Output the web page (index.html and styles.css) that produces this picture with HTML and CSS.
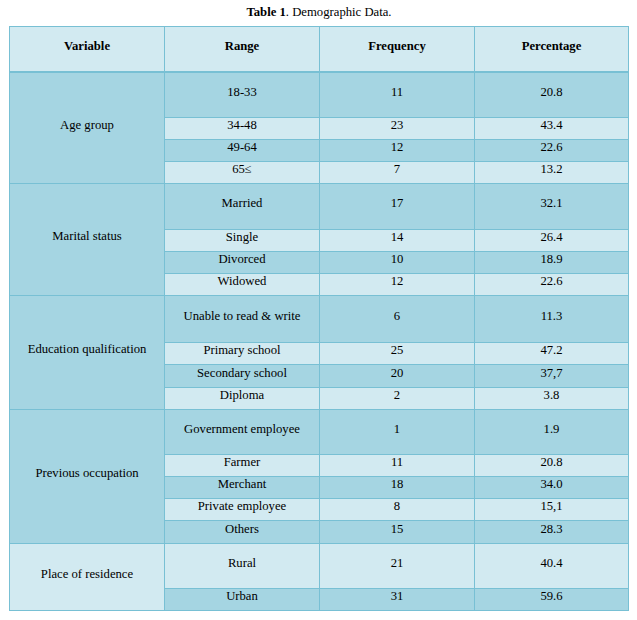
FILE: index.html
```html
<!DOCTYPE html>
<html>
<head>
<meta charset="utf-8">
<title>Table 1. Demographic Data.</title>
<link rel="stylesheet" href="styles.css">
</head>
<body>
<div class="page">
  <div class="caption"><b>Table 1</b>. Demographic Data.</div>
  <div class="table">
    <div class="cell head">Variable</div>
    <div class="cell head">Range</div>
    <div class="cell head">Frequency</div>
    <div class="cell head">Percentage</div>

    <div class="cell var dark span4">Age group</div>
    <div class="cell dark">18-33</div><div class="cell dark">11</div><div class="cell dark">20.8</div>
    <div class="cell light">34-48</div><div class="cell light">23</div><div class="cell light">43.4</div>
    <div class="cell dark">49-64</div><div class="cell dark">12</div><div class="cell dark">22.6</div>
    <div class="cell light">65≤</div><div class="cell light">7</div><div class="cell light">13.2</div>

    <div class="cell var dark span4">Marital status</div>
    <div class="cell dark">Married</div><div class="cell dark">17</div><div class="cell dark">32.1</div>
    <div class="cell light">Single</div><div class="cell light">14</div><div class="cell light">26.4</div>
    <div class="cell dark">Divorced</div><div class="cell dark">10</div><div class="cell dark">18.9</div>
    <div class="cell light">Widowed</div><div class="cell light">12</div><div class="cell light">22.6</div>

    <div class="cell var dark span4">Education qualification</div>
    <div class="cell dark">Unable to read &amp; write</div><div class="cell dark">6</div><div class="cell dark">11.3</div>
    <div class="cell light">Primary school</div><div class="cell light">25</div><div class="cell light">47.2</div>
    <div class="cell dark">Secondary school</div><div class="cell dark">20</div><div class="cell dark">37,7</div>
    <div class="cell light">Diploma</div><div class="cell light">2</div><div class="cell light">3.8</div>

    <div class="cell var dark span5">Previous occupation</div>
    <div class="cell dark">Government employee</div><div class="cell dark">1</div><div class="cell dark">1.9</div>
    <div class="cell light">Farmer</div><div class="cell light">11</div><div class="cell light">20.8</div>
    <div class="cell dark">Merchant</div><div class="cell dark">18</div><div class="cell dark">34.0</div>
    <div class="cell light">Private employee</div><div class="cell light">8</div><div class="cell light">15,1</div>
    <div class="cell dark">Others</div><div class="cell dark">15</div><div class="cell dark">28.3</div>

    <div class="cell var light span2">Place of residence</div>
    <div class="cell light">Rural</div><div class="cell light">21</div><div class="cell light">40.4</div>
    <div class="cell dark">Urban</div><div class="cell dark">31</div><div class="cell dark">59.6</div>
  </div>
</div>
</body>
</html>
```
FILE: styles.css
```css
html, body {
  margin: 0;
  padding: 0;
  background: #ffffff;
}

body {
  font-family: "Liberation Serif", "Times New Roman", serif;
  font-size: 12.7px;
  color: #000000;
}

.page {
  padding: 0 9px;
  width: 620px;
}

.caption {
  box-sizing: border-box;
  height: 26px;
  padding-top: 5px;
  line-height: 15px;
  text-align: center;
}

.caption b {
  font-weight: bold;
}

.table {
  box-sizing: border-box;
  width: 620px;
  display: grid;
  grid-template-columns: 155px 155px 155px 154px;
  grid-template-rows: 46px 45px 22px 22px 22px 46px 22px 22px 22px 47px 22px 23px 22px 45px 22px 22px 22px 23px 45px 22px;
  border-top: 1px solid #78c0d4;
  border-left: 1px solid #78c0d4;
}

.cell {
  box-sizing: border-box;
  display: flex;
  align-items: center;
  justify-content: center;
  text-align: center;
  padding: 0 4px 6px;
  line-height: 15px;
  border-right: 1px solid #78c0d4;
  border-bottom: 1px solid #78c0d4;
}

.head {
  background: #d2eaf1;
  font-weight: bold;
  border-bottom-width: 2px;
}

.dark {
  background: #a5d5e2;
}

.light {
  background: #d2eaf1;
}

.span2 { grid-row: span 2; }
.span4 { grid-row: span 4; }
.span5 { grid-row: span 5; }
```
